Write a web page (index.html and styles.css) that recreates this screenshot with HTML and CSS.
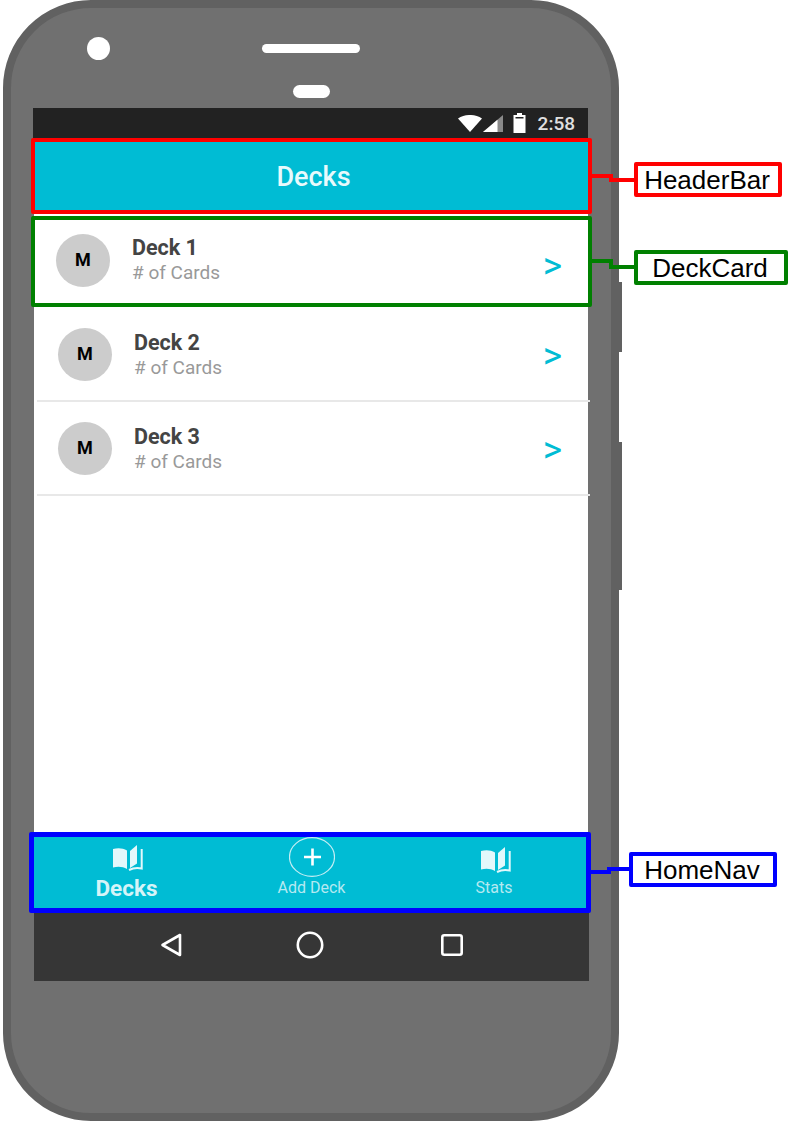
FILE: index.html
```html
<!DOCTYPE html>
<html>
<head>
    <link rel="stylesheet" href="styles.css">
</head>
<body>

<div class="page">
    <div class="side-btn side-btn-power"></div>
    <div class="side-btn side-btn-volume"></div>

    <div class="phone">
        <div class="phone-top">
            <div class="camera"></div>
            <div class="speaker"></div>
        </div>
        <div class="sensor"></div>

        <div class="screen">
            <div class="status-bar">
                <svg class="wifi" width="24" height="17" viewBox="0 0 24 17"><path d="M0 3.5C7 -1.2 17 -1.2 24 3.5L12 17Z" fill="#fff"/></svg>
                <svg class="signal" width="20" height="17" viewBox="0 0 20 17"><path d="M0 17L20 0V17Z" fill="#8a8a8a"/><path d="M0 17L14.5 4.7V17Z" fill="#fff"/></svg>
                <svg class="battery" width="13" height="20" viewBox="0 0 13 20"><path d="M4 0H9V2H12.5V20H0.5V2H4Z" fill="#fff"/><rect x="2.5" y="4" width="8" height="1.5" fill="#222"/></svg>
                <span class="time">2:58</span>
            </div>

            <div class="header-bar">Decks</div>

            <div class="deck-list">
                <div class="deck-row deck-row-first">
                    <div class="avatar">M</div>
                    <div class="deck-text">
                        <div class="deck-name">Deck 1</div>
                        <div class="deck-count"># of Cards</div>
                    </div>
                    <div class="chevron">&gt;</div>
                </div>
                <div class="deck-row">
                    <div class="avatar">M</div>
                    <div class="deck-text">
                        <div class="deck-name">Deck 2</div>
                        <div class="deck-count"># of Cards</div>
                    </div>
                    <div class="chevron">&gt;</div>
                </div>
                <div class="deck-row">
                    <div class="avatar">M</div>
                    <div class="deck-text">
                        <div class="deck-name">Deck 3</div>
                        <div class="deck-count"># of Cards</div>
                    </div>
                    <div class="chevron">&gt;</div>
                </div>
            </div>

            <div class="home-nav">
                <div class="nav-item nav-item-active">
                    <svg class="book" width="30" height="26" viewBox="0 0 30 26"><path d="M0 4C5 2.5 10 3 14 5.5V24C10 21.5 5 21 0 22.5Z" fill="#e3f8fb"/><path d="M17 6L24 0V18.5L17 23Z" fill="#e3f8fb"/><path d="M28.7 4V23.5C24 22.5 20 23 16 25" fill="none" stroke="#e3f8fb" stroke-width="2"/></svg>
                    <span>Decks</span>
                </div>
                <div class="nav-item">
                    <svg width="46" height="40" viewBox="0 0 46 40"><ellipse cx="23" cy="20" rx="22.5" ry="19.3" fill="none" stroke="#c4eef4" stroke-width="1.2"/><path d="M15 20H32M23.5 11.5V28.5" fill="none" stroke="#fff" stroke-width="2.6"/></svg>
                    <span>Add Deck</span>
                </div>
                <div class="nav-item nav-item-last">
                    <svg class="book" width="30" height="26" viewBox="0 0 30 26"><path d="M0 4C5 2.5 10 3 14 5.5V24C10 21.5 5 21 0 22.5Z" fill="#e3f8fb"/><path d="M17 6L24 0V18.5L17 23Z" fill="#e3f8fb"/><path d="M28.7 4V23.5C24 22.5 20 23 16 25" fill="none" stroke="#e3f8fb" stroke-width="2"/></svg>
                    <span>Stats</span>
                </div>
            </div>

            <div class="android-nav">
                <svg width="22" height="24" viewBox="0 0 22 24"><path d="M2.5 12L20 2V22Z" fill="none" stroke="#fff" stroke-width="2.6" stroke-linejoin="round"/></svg>
                <svg width="28" height="28" viewBox="0 0 28 28"><circle cx="14" cy="14" r="12.2" fill="none" stroke="#fff" stroke-width="2.6"/></svg>
                <svg class="recents" width="22" height="22" viewBox="0 0 22 22"><rect x="1.3" y="1.3" width="19.4" height="19.4" rx="2" fill="none" stroke="#fff" stroke-width="2.6"/></svg>
            </div>
        </div>
    </div>

    <!-- annotations on top of the phone -->
    <div class="note-frame note-frame-header"></div>
    <div class="note-frame note-frame-card"></div>
    <div class="note-frame note-frame-nav"></div>

    <svg class="note-lines" width="794" height="1123" viewBox="0 0 794 1123">
        <path d="M590 176H611V180H636" fill="none" stroke="#ff0000" stroke-width="4"/>
        <path d="M590 261H611V267H636" fill="none" stroke="#008000" stroke-width="4"/>
        <path d="M590 872H609V869H631" fill="none" stroke="#0000ff" stroke-width="4"/>
    </svg>

    <div class="note-label note-label-header">HeaderBar</div>
    <div class="note-label note-label-card">DeckCard</div>
    <div class="note-label note-label-nav">HomeNav</div>
</div>

</body>
</html>
```

FILE: styles.css
```css
html, body {
    margin: 0;
    padding: 0;
    background: #fff;
}

body {
    font-family: Roboto, sans-serif;
}

.page {
    position: relative;
    width: 794px;
    height: 1123px;
    overflow: hidden;
}

/* phone body */
.phone {
    position: relative;
    box-sizing: border-box;
    width: 616px;
    height: 1121px;
    margin-left: 3px;
    border: 8px solid #616161;
    border-radius: 88px;
    background-color: #707070;
}

.side-btn {
    position: absolute;
    left: 616px;
    width: 6px;
    background-color: #616161;
}

.side-btn-power {
    top: 282px;
    height: 70px;
}

.side-btn-volume {
    top: 442px;
    height: 148px;
}

.phone-top {
    display: flex;
    align-items: center;
    height: 82px;
    padding-left: 76px;
}

.camera {
    width: 23px;
    height: 23px;
    margin-top: -1px;
    border-radius: 50%;
    background-color: #fff;
}

.speaker {
    width: 98px;
    height: 9px;
    margin-left: 152px;
    margin-top: -1px;
    border-radius: 5px;
    background-color: #fff;
}

.sensor {
    width: 37px;
    height: 13px;
    margin-left: 282px;
    margin-top: -5px;
    border-radius: 7px;
    background-color: #fff;
}

/* screen */
.screen {
    display: flex;
    flex-direction: column;
    width: 555px;
    height: 873px;
    margin-top: 10px;
    margin-left: 23px;
}

.status-bar {
    display: flex;
    align-items: center;
    justify-content: flex-end;
    box-sizing: border-box;
    height: 30px;
    margin-left: -1px;
    margin-right: 1px;
    padding-right: 13px;
    background-color: #222;
}

.wifi {
    margin-right: 1px;
}

.battery {
    margin-left: 10px;
    margin-right: 12px;
}

.time {
    font-size: 19px;
    font-weight: 500;
    color: #e0e0e0;
}

.header-bar {
    height: 76px;
    margin-left: -1px;
    padding-left: 5px;
    line-height: 78px;
    text-align: center;
    font-size: 27px;
    font-weight: 500;
    color: #e8fafc;
    background-color: #00bcd4;
}

.deck-list {
    flex: 1;
    margin-right: 1px;
    background-color: #fff;
}

.deck-row {
    display: flex;
    align-items: center;
    box-sizing: border-box;
    height: 94px;
    margin-left: 3px;
    margin-right: -2px;
    padding-top: 1px;
    padding-left: 21px;
    padding-right: 28px;
    border-bottom: 2px solid #e8e8e8;
}

.deck-row-first {
    margin-left: 0;
    padding-top: 0;
    padding-bottom: 2px;
    padding-left: 22px;
    border-bottom: none;
}

.deck-row-first .chevron {
    margin-top: 12px;
}

.avatar {
    flex: none;
    width: 54px;
    height: 53px;
    line-height: 52px;
    margin-right: 22px;
    border-radius: 50%;
    text-align: center;
    font-size: 18px;
    font-weight: 700;
    color: #000;
    background-color: #cccccc;
}

.deck-name {
    line-height: 25px;
    font-size: 21.5px;
    font-weight: 700;
    color: #444;
}

.deck-count {
    line-height: 25px;
    font-size: 19px;
    color: #999;
}

.chevron {
    margin-left: auto;
    margin-top: 2px;
    line-height: 40px;
    font-size: 37px;
    color: #00bcd4;
}

/* bottom navs */
.home-nav {
    display: grid;
    grid-template-columns: repeat(3, 1fr);
    height: 81px;
    background-color: #00bcd4;
}

.nav-item {
    display: flex;
    flex-direction: column;
    align-items: center;
    justify-content: flex-end;
    height: 65px;
    font-size: 16px;
    color: #b5e9f1;
}

.nav-item svg {
    margin-bottom: 1px;
}

.nav-item .book {
    margin-bottom: 5px;
}

.nav-item-active {
    height: 69px;
    font-size: 22.5px;
    font-weight: 700;
    color: #d5f4f8;
}

.nav-item-active .book {
    margin-bottom: 4px;
    margin-left: 2px;
}

.nav-item-last {
    padding-right: 5px;
}

.nav-item-last .book {
    margin-left: 4px;
}

.android-nav {
    display: flex;
    align-items: center;
    box-sizing: border-box;
    height: 68px;
    gap: 114px;
    padding-left: 126px;
    padding-bottom: 4px;
    background-color: #363636;
}

.recents {
    margin-left: 3px;
}

/* annotation boxes */
.note-frame {
    position: absolute;
    box-sizing: border-box;
    border-radius: 2px;
}

.note-frame-header {
    left: 31px;
    top: 138px;
    width: 561px;
    height: 76px;
    border: 4px solid #ff0000;
}

.note-frame-card {
    left: 31px;
    top: 216px;
    width: 561px;
    height: 91px;
    border: 4px solid #008000;
}

.note-frame-nav {
    left: 29px;
    top: 832px;
    width: 562px;
    height: 81px;
    border: 5px solid #0000ff;
}

.note-lines {
    position: absolute;
    left: 0;
    top: 0;
}

.note-label {
    position: absolute;
    box-sizing: border-box;
    height: 35px;
    padding-right: 2px;
    line-height: 29px;
    border-radius: 2px;
    text-align: center;
    font-family: "Liberation Sans", Arial, sans-serif;
    font-size: 26px;
    color: #000;
    background-color: #fff;
}

.note-label-header {
    left: 634px;
    top: 162px;
    width: 148px;
    border: 4px solid #ff0000;
}

.note-label-card {
    left: 634px;
    top: 250px;
    width: 154px;
    border: 4px solid #008000;
}

.note-label-nav {
    left: 629px;
    top: 852px;
    width: 148px;
    border: 4px solid #0000ff;
}
```
